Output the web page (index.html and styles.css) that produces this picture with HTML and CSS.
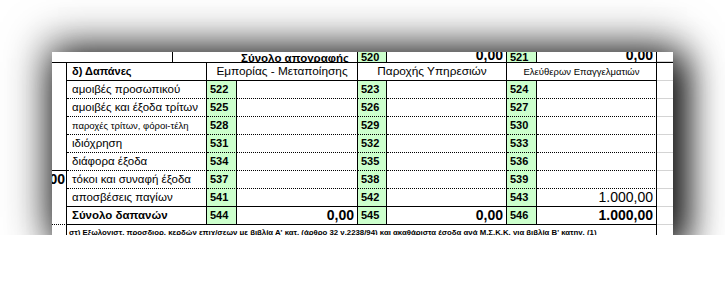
FILE: index.html
```html
<!DOCTYPE html>
<html lang="el">
<head>
<meta charset="utf-8">
<title>Δαπάνες</title>
<link rel="stylesheet" href="styles.css">
</head>
<body>
<div class="paper">
  <div class="toprow">
    <div class="tc tc-blank"></div>
    <div class="tc tc-label"><span>Σύνολο απογραφής</span></div>
    <div class="tc tc-code"><span>520</span></div>
    <div class="tc tc-val"><span>0,00</span></div>
    <div class="tc tc-code tc-code3"><span>521</span></div>
    <div class="tc tc-val tc-last"><span>0,00</span></div>
    <div class="tc tc-grid"></div>
  </div>

  <div class="row head">
    <div class="c c0"></div>
    <div class="c lbl bold">δ) Δαπάνες</div>
    <div class="c hdr span2">Εμπορίας - Μεταποίησης</div>
    <div class="c hdr span2">Παροχής Υπηρεσιών</div>
    <div class="c hdr span2 hdr-small last">Ελεύθερων Επαγγελματιών</div>
    <div class="c grid"></div>
  </div>

  <div class="row dot">
    <div class="c c0"></div>
    <div class="c lbl">αμοιβές προσωπικού</div>
    <div class="c code">522</div><div class="c val"></div>
    <div class="c code">523</div><div class="c val"></div>
    <div class="c code">524</div><div class="c val last"></div>
    <div class="c grid"></div>
  </div>

  <div class="row dot">
    <div class="c c0"></div>
    <div class="c lbl">αμοιβές και έξοδα τρίτων</div>
    <div class="c code">525</div><div class="c val"></div>
    <div class="c code">526</div><div class="c val"></div>
    <div class="c code">527</div><div class="c val last"></div>
    <div class="c grid"></div>
  </div>

  <div class="row dot">
    <div class="c c0"></div>
    <div class="c lbl lbl-small">παροχές τρίτων, φόροι-τέλη</div>
    <div class="c code">528</div><div class="c val"></div>
    <div class="c code">529</div><div class="c val"></div>
    <div class="c code">530</div><div class="c val last"></div>
    <div class="c grid"></div>
  </div>

  <div class="row dot">
    <div class="c c0"></div>
    <div class="c lbl">ιδιόχρηση</div>
    <div class="c code">531</div><div class="c val"></div>
    <div class="c code">532</div><div class="c val"></div>
    <div class="c code">533</div><div class="c val last"></div>
    <div class="c grid"></div>
  </div>

  <div class="row dot">
    <div class="c c0 c0-bottom"></div>
    <div class="c lbl">διάφορα έξοδα</div>
    <div class="c code">534</div><div class="c val"></div>
    <div class="c code">535</div><div class="c val"></div>
    <div class="c code">536</div><div class="c val last"></div>
    <div class="c grid"></div>
  </div>

  <div class="row dot">
    <div class="c c0 c0-num">0,00</div>
    <div class="c lbl">τόκοι και συναφή έξοδα</div>
    <div class="c code">537</div><div class="c val"></div>
    <div class="c code">538</div><div class="c val"></div>
    <div class="c code">539</div><div class="c val last"></div>
    <div class="c grid"></div>
  </div>

  <div class="row solid">
    <div class="c c0"></div>
    <div class="c lbl">αποσβέσεις παγίων</div>
    <div class="c code">541</div><div class="c val"></div>
    <div class="c code">542</div><div class="c val"></div>
    <div class="c code">543</div><div class="c val last num">1.000,00</div>
    <div class="c grid"></div>
  </div>

  <div class="row solid total">
    <div class="c c0 c0-dot"></div>
    <div class="c lbl lbl-total">Σύνολο δαπανών</div>
    <div class="c code">544</div><div class="c val num bold">0,00</div>
    <div class="c code">545</div><div class="c val num bold">0,00</div>
    <div class="c code">546</div><div class="c val last num bold">1.000,00</div>
    <div class="c grid"></div>
  </div>

  <div class="footrow">
    <div class="fc fc0"></div>
    <div class="fc fc-text"><span>στ) Εξωλογιστ. προσδιορ. κερδών επιχ/σεων με βιβλία Α' κατ. (άρθρο 32 ν.2238/94) και ακαθάριστα έσοδα ανά Μ.Σ.Κ.Κ. για βιβλία Β' κατηγ. (1)</span></div>
    <div class="fc fc-grid"></div>
  </div>
</div>
</body>
</html>
```

FILE: styles.css
```css
* { box-sizing: border-box; }

html, body {
  margin: 0;
  padding: 0;
  background: #ffffff;
}

body {
  padding: 52px 0 0 52px;
  font-family: "Liberation Sans", Arial, sans-serif;
  color: #000;
}

.paper {
  width: 621px;
  height: 183px;
  background: #fff;
  overflow: hidden;
  box-shadow:
    0 -4px 40px 6px rgba(0, 0, 0, 0.55),
    10px 10px 34px 4px rgba(0, 0, 0, 0.85);
}

/* top (cut) row */
.toprow {
  display: grid;
  grid-template-columns: 121px 185px 29px 120px 30px 120px 16px;
  height: 11px;
  border-bottom: 1px solid #000;
}
.tc {
  height: 10px;
  overflow: hidden;
  border-right: 1px solid #000;
  font-weight: bold;
  white-space: nowrap;
}
.tc span {
  display: block;
  line-height: 15px;
  margin-top: -1px;
}
.tc-label {
  text-align: right;
  padding-right: 8px;
  font-size: 11.5px;
}
.tc-code {
  background: #ccffcc;
  font-size: 11px;
  padding-left: 3px;
}
.tc-code span { margin-top: -2px; }
.tc-val {
  text-align: right;
  padding-right: 3px;
  font-size: 14px;
}
.tc-val span { margin-top: -4px; }
.tc-grid { border-right: 0; border-bottom: 1px solid #d4d4d4; }

/* main rows */
.row {
  display: grid;
  grid-template-columns: 15px 140px 30px 121px 29px 120px 30px 120px 16px;
  height: 18px;
}
.c {
  height: 18px;
  border-right: 1px solid #000;
  white-space: nowrap;
  overflow: hidden;
  font-size: 11.5px;
  line-height: 17px;
}
.c0 { border-right: 1px solid #000; }
.span2 { grid-column: span 2; }

.head .c { border-bottom: 1px solid #000; }
.head .c0 { border-bottom: 0; }
.dot .c { border-bottom: 1px dotted #000; }
.dot .c0 { border-bottom: 0; }
.solid .c { border-bottom: 1px solid #000; }
.solid .c0 { border-bottom: 0; }

.c0-bottom { border-bottom: 1px solid #000 !important; }
.total .c0-dot { border-bottom: 1px dotted #000 !important; }
.c0-num {
  text-align: right;
  font-weight: bold;
  font-size: 14px;
  padding-right: 1px;
  direction: rtl;
}

.lbl {
  padding-left: 5px;
}
.lbl.bold { font-size: 11px; }
.lbl-small { font-size: 9.5px; }
.lbl-total { font-size: 11.5px; font-weight: bold; }
.bold { font-weight: bold; }

.hdr {
  text-align: center;
  font-size: 11.8px;
}
.hdr-small { font-size: 9.5px; }

.code {
  background: #ccffcc;
  font-weight: bold;
  font-size: 11px;
  padding-left: 3px;
}
.val { background: #fff; }
.num {
  text-align: right;
  padding-right: 3px;
  font-size: 14px;
}

.grid {
  border-right: 0;
  border-bottom: 1px solid #d4d4d4 !important;
}

/* footer (cut) row */
.footrow {
  display: grid;
  grid-template-columns: 15px 590px 16px;
  height: 10px;
}
.fc {
  height: 10px;
  overflow: hidden;
}
.fc0 { border-right: 1px solid #000; }
.fc-text {
  border-right: 1px solid #000;
  padding-left: 2px;
  font-size: 7.8px;
  font-weight: bold;
  white-space: nowrap;
}
.fc-text span { display: block; line-height: 10px; margin-top: 3px; }
```
